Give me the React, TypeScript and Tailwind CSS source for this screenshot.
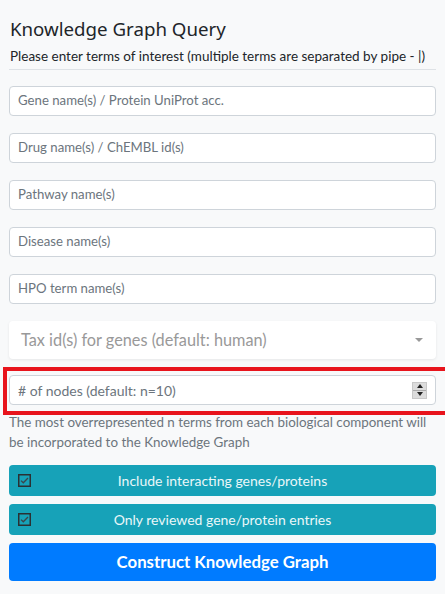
import { useState } from "react";

const fields = [
  "Gene name(s) / Protein UniProt acc.",
  "Drug name(s) / ChEMBL id(s)",
  "Pathway name(s)",
  "Disease name(s)",
  "HPO term name(s)",
];

function CheckIcon() {
  return (
    <svg width="13" height="13" viewBox="0 0 13 13" className="shrink-0">
      <rect x="0.75" y="0.75" width="11.5" height="11.5" fill="none" stroke="#2b3033" strokeWidth="1.5" />
      <path d="M3 6.6 L5.3 8.8 L10 4" fill="none" stroke="#3d4448" strokeWidth="1.3" />
    </svg>
  );
}

function Spinner() {
  return (
    <div className="flex flex-col w-[15px] h-[17px] bg-[#dcdcdc] border border-[#c8c8c8]">
      <div className="flex-1 flex items-center justify-center border-b border-[#aaa]">
        <div className="w-0 h-0 border-l-[3.5px] border-r-[3.5px] border-b-[4px] border-l-transparent border-r-transparent border-b-[#222]" />
      </div>
      <div className="flex-1 flex items-center justify-center">
        <div className="w-0 h-0 border-l-[3.5px] border-r-[3.5px] border-t-[4px] border-l-transparent border-r-transparent border-t-[#222]" />
      </div>
    </div>
  );
}

export default function App() {
  const [opts] = useState([
    "Include interacting genes/proteins",
    "Only reviewed gene/protein entries",
  ]);

  return (
    <div
      className="relative h-[594px] overflow-hidden bg-[#f8f9fa] px-[9px] pt-[15px] text-[#212529]"
      style={{ fontFamily: 'Lato, "Noto Sans", sans-serif' }}
    >
      <h4
        className="text-[18.7px] leading-[28px] pl-[1px] whitespace-nowrap"
        style={{ fontFamily: '"Noto Sans", sans-serif' }}
      >
        Knowledge Graph Query
      </h4>
      <p className="text-[13.5px] leading-[20px] mt-[3px] pl-[1px] whitespace-nowrap">
        Please enter terms of interest (multiple terms are separated by pipe - |)
      </p>
      <hr className="border-t border-[#dee2e6] mt-[3px]" />

      <div className="flex flex-col gap-[17px] mt-[16px]">
        {fields.map((f) => (
          <div
            key={f}
            className="h-[30px] flex items-center bg-white border border-[#ced4da] rounded-[4px] pl-[8px] text-[13.2px] text-[#6c757d]"
          >
            {f}
          </div>
        ))}
        <div className="h-[38px] flex items-center justify-between bg-white rounded-[4px] shadow-[0_1px_3px_rgba(0,0,0,0.08)] pl-[12px] pr-[13px] text-[16.3px] text-[#999]">
          <span>Tax id(s) for genes (default: human)</span>
          <div className="w-0 h-0 border-l-[4px] border-r-[4px] border-t-[4px] border-l-transparent border-r-transparent border-t-[#999]" />
        </div>
      </div>

      <div className="mt-[16px] h-[30px] flex items-center justify-between bg-white border border-[#ced4da] rounded-[4px] pl-[8px] pr-[8px] text-[14px] text-[#6c757d]">
        <span># of nodes (default: n=10)</span>
        <Spinner />
      </div>
      <p className="text-[13.4px] leading-[20px] text-[#6c757d] mt-[7px]">
        The most overrepresented n terms from each biological component will be incorporated to the Knowledge Graph
      </p>

      <div className="flex flex-col gap-[8px] mt-[13px]">
        {opts.map((o) => (
          <div
            key={o}
            className="relative h-[31px] flex items-center justify-center bg-[#17a2b8] rounded-[4px] text-[14px] text-[#eaf7f9]"
          >
            <div className="absolute left-[9px] top-[9px]">
              <CheckIcon />
            </div>
            {o}
          </div>
        ))}
        <button className="h-[38px] bg-[#007bff] rounded-[4px] text-white font-bold text-[16.8px]">
          Construct Knowledge Graph
        </button>
      </div>

      <div className="absolute left-[3px] top-[367px] w-[446px] h-[48px] border-4 border-[#e8141c] pointer-events-none" />
    </div>
  );
}
